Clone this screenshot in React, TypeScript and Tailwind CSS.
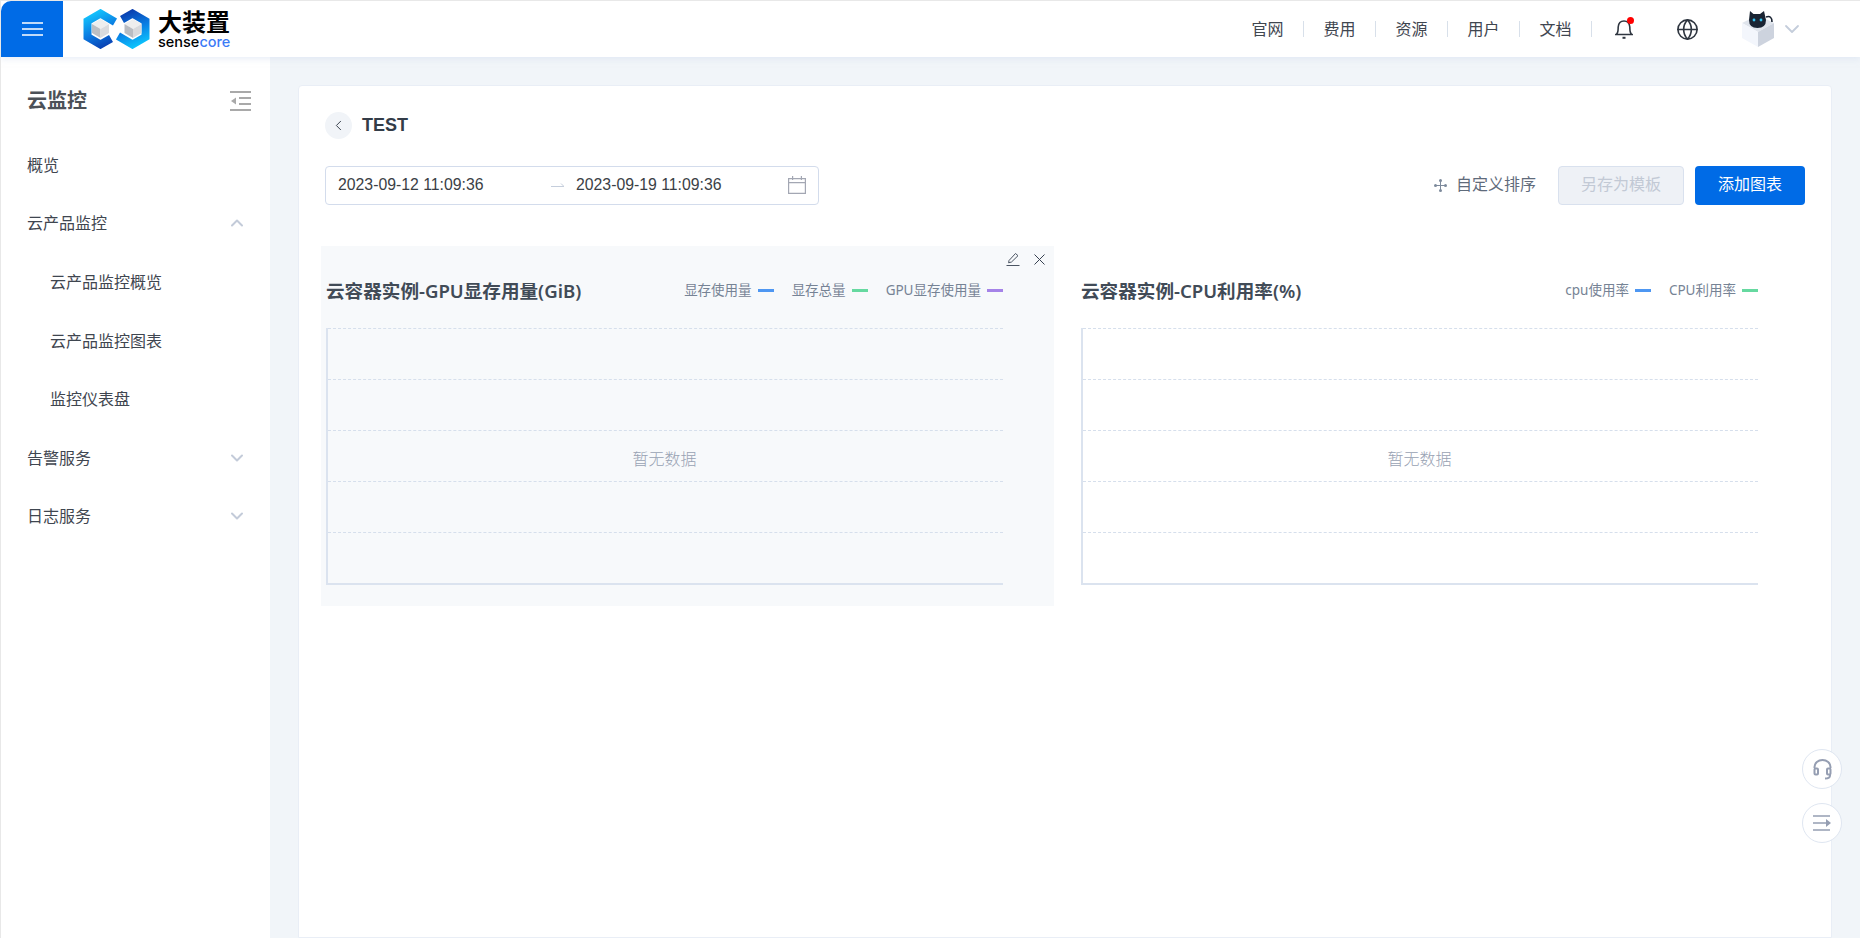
import { ChevronDown, ChevronUp, ChevronLeft, Globe } from 'lucide-react';

const FONT = 'font-["Noto_Sans","Noto_Sans_CJK_SC",sans-serif]';

const menu = [
  { label: '概览', top: true },
  { label: '云产品监控', chevron: 'up' },
  { label: '云产品监控概览', sub: true },
  { label: '云产品监控图表', sub: true },
  { label: '监控仪表盘', sub: true },
  { label: '告警服务', chevron: 'down' },
  { label: '日志服务', chevron: 'down' },
];

const navItems = ['官网', '费用', '资源', '用户', '文档'];

type LegendItem = { name: string; color: string };

function Logo() {
  return (
    <div className="flex items-center">
      <svg width="67" height="40" viewBox="0 0 67 40">
        <defs>
          <linearGradient id="la" gradientUnits="userSpaceOnUse" x1="10" y1="2" x2="26" y2="38">
            <stop offset="0" stopColor="#14c8ff" />
            <stop offset="0.55" stopColor="#0a78e0" />
            <stop offset="1" stopColor="#0a3cae" />
          </linearGradient>
          <linearGradient id="lb" gradientUnits="userSpaceOnUse" x1="44" y1="2" x2="58" y2="38">
            <stop offset="0" stopColor="#0a3cae" />
            <stop offset="0.5" stopColor="#0a80e5" />
            <stop offset="1" stopColor="#0ccbff" />
          </linearGradient>
        </defs>
        <path d="M32 13 L17.5 4.5 L4.5 12 L4.5 28 L17.5 35.5 L28 29.5" fill="none" stroke="url(#la)" strokeWidth="8" />
        <path d="M35 27 L49.5 35.5 L62.5 28 L62.5 12 L49.5 4.5 L39 10.5" fill="none" stroke="url(#lb)" strokeWidth="8" />
        <path d="M17.5 10 L26 15 L17.5 20 L9 15 Z" fill="#eeeeee" />
        <path d="M9 15 L17.5 20 L17.5 29 L9 24 Z" fill="#bcbfc4" />
        <path d="M26 15 L17.5 20 L17.5 29 L26 24 Z" fill="#dadbde" />
        <path d="M50 10 L58.5 15 L50 20 L41.5 15 Z" fill="#eeeeee" />
        <path d="M41.5 15 L50 20 L50 29 L41.5 24 Z" fill="#b9bcc2" />
        <path d="M58.5 15 L50 20 L50 29 L58.5 24 Z" fill="#d8d9dc" />
      </svg>
      <div className="mt-[-3px] ml-[8px] flex flex-col">
        <span className='text-[24px] leading-[27px] font-bold text-black font-["Noto_Sans_CJK_SC",sans-serif]'>大装置</span>
        <div className='mt-[1px] flex text-[14.5px] leading-[13px] font-medium font-["Inter",sans-serif]'>
          <span className="text-black">sense</span>
          <span className="text-[#3b7bf6]">core</span>
        </div>
      </div>
    </div>
  );
}

function Avatar() {
  return (
    <svg width="34" height="36" viewBox="0 0 34 36">
      <path d="M1 12 L17 4 L33 12 L17 21 Z" fill="#dfe4ec" />
      <path d="M1 12 L17 21 L17 36 L1 27 Z" fill="#f3f6fc" />
      <path d="M33 12 L17 21 L17 36 L33 27 Z" fill="#cdd3de" />
      <path d="M9 0 L12.5 3 L19 3 L23 0 L25 9 Q25 17 16.5 17 Q8 17 8 9 Z" fill="#1a2433" />
      <path d="M25 6 Q31 4 31 11" stroke="#1a2433" strokeWidth="1.6" fill="none" />
      <circle cx="13" cy="9" r="1.4" fill="#35c3f0" />
      <circle cx="20" cy="9" r="1.4" fill="#35c3f0" />
    </svg>
  );
}

function ChartCard({ title, legend, hovered }: { title: string; legend: LegendItem[]; hovered?: boolean }) {
  return (
    <div className={`relative h-[360px] w-[733px] shrink-0 pl-[5px] ${hovered ? 'bg-[#f7f9fb]' : ''}`}>
      {hovered && (
        <div className="absolute top-[6px] right-[9px] flex items-center gap-[14px]">
          <svg width="14" height="14" viewBox="0 0 14 14" fill="none" stroke="#4b5563" strokeWidth="1">
            <path d="M3 8.5 L9.5 1.5 L12 3.7 L5.5 10 L2.6 10.8 Z" />
            <path d="M0.5 13.5 H13.5" />
          </svg>
          <svg width="11" height="11" viewBox="0 0 11 11" fill="none" stroke="#374151" strokeWidth="1">
            <path d="M0.5 0.5 L10.5 10.5 M10.5 0.5 L0.5 10.5" />
          </svg>
        </div>
      )}
      <div className="flex h-[82px] w-[677px] items-center justify-between pt-[7px]">
        <span className={`text-[18.6px] font-semibold text-[#414b57] ${FONT}`}>{title}</span>
        <div className="flex items-center gap-[18px] overflow-hidden">
          {legend.map((item) => (
            <div key={item.name} className="flex shrink-0 items-center gap-[6px]">
              <span className={`text-[13.5px] text-[#768395] ${FONT}`}>{item.name}</span>
              <span className="h-[3px] w-[16px]" style={{ backgroundColor: item.color }} />
            </div>
          ))}
        </div>
      </div>
      <div className="relative h-[257px] w-[677px] border-b-2 border-l-2 border-[#dbe3ef]">
        {[0, 1, 2, 3, 4].map((i) => (
          <div key={i} className="h-[51px] border-t border-dashed border-[#d6dfec]" />
        ))}
        <div className={`absolute inset-0 flex items-center justify-center pt-[6px] pr-[2px] text-[16px] font-light text-[#98a2b3] ${FONT}`}>
          暂无数据
        </div>
      </div>
    </div>
  );
}

export default function App() {
  return (
    <div className={`flex h-[938px] w-[1860px] flex-col overflow-hidden border-t border-l border-[#e8e8e8] bg-[#f1f5f9] ${FONT}`}>
      <header className="z-10 flex h-[56px] shrink-0 items-center bg-white pr-[56px] shadow-[0_2px_6px_rgba(210,222,240,0.5)]">
        <button className="flex h-full w-[62px] items-center justify-center rounded-tl-[10px] bg-[#006be6]">
          <svg width="21" height="16" viewBox="0 0 21 16" stroke="white" strokeWidth="1.6">
            <path d="M0 2 H21 M0 8 H21 M0 14 H21" />
          </svg>
        </button>
        <div className="ml-[20px]">
          <Logo />
        </div>
        <div className="ml-auto flex items-center">
          {navItems.map((item) => (
            <div key={item} className="flex w-[72px] items-center justify-between">
              <span className="w-[71px] text-center text-[16px] text-[#3f4650]">{item}</span>
              <span className="h-[16px] w-px bg-[#d8e0ea]" />
            </div>
          ))}
          <div className="relative ml-[23px]">
            <svg width="18" height="20" viewBox="0 0 18 20" fill="none" stroke="#2f3640" strokeWidth="1.6">
              <path d="M1 15.5 C3.5 14 3 11 3.2 8 C3.5 4 6 2 9 2 C12 2 14.5 4 14.8 8 C15 11 14.5 14 17 15.5 Z" />
              <path d="M7.5 18.8 H10.5" strokeWidth="2" />
            </svg>
            <span className="absolute top-[-2px] right-[-1px] h-[7px] w-[7px] rounded-full bg-[#ff0000]" />
          </div>
          <Globe className="ml-[43px]" size={23} strokeWidth={1.7} color="#2f3640" />
          <div className="ml-[42px]">
            <Avatar />
          </div>
          <ChevronDown className="ml-[5px]" size={24} strokeWidth={1.8} color="#c4cddb" />
        </div>
      </header>

      <div className="flex min-h-0 flex-1">
        <aside className="w-[269px] shrink-0 bg-white">
          <div className="flex h-[78.5px] items-center justify-between pt-[10px] pr-[19px] pl-[26px]">
            <span className="text-[20px] font-semibold text-[#4c5158]">云监控</span>
            <svg width="21" height="20" viewBox="0 0 21 20" stroke="#a9a9a9" strokeWidth="2" fill="none">
              <path d="M0 1 H21 M9 7 H21 M9 13 H21 M0 19 H21" />
              <path d="M6 6.5 L1 10 L6 13.5 Z" fill="#a9a9a9" stroke="none" />
            </svg>
          </div>
          <nav className="flex flex-col">
            {menu.map((item) => (
              <div
                key={item.label}
                className={`flex h-[58.6px] items-center justify-between pr-[23px] text-[16px] text-[#3f4650] ${item.sub ? 'pl-[49px]' : 'pl-[26px]'}`}
              >
                <span>{item.label}</span>
                {item.chevron === 'up' && <ChevronUp size={20} strokeWidth={2.4} color="#c3cbd9" />}
                {item.chevron === 'down' && <ChevronDown size={20} strokeWidth={2.4} color="#c3cbd9" />}
              </div>
            ))}
          </nav>
        </aside>

        <main className="relative min-w-0 flex-1 px-[28px] pt-[28px]">
          <div className="relative h-full w-[1534px] rounded-t border border-[#e9eef6] bg-white pt-[25px] pl-[26px]">
            <div className="flex items-center gap-[10px]">
              <span className="flex h-[27px] w-[27px] items-center justify-center rounded-full bg-[#f1f4f8]">
                <ChevronLeft size={17} strokeWidth={1.4} color="#39424e" />
              </span>
              <span className='pt-[1px] text-[18px] leading-[27px] font-bold text-[#333c48] font-["Liberation_Sans",sans-serif]'>TEST</span>
            </div>

            <div className='mt-[27px] flex items-center justify-between pr-[26px] font-["Liberation_Sans","Noto_Sans_CJK_SC",sans-serif]'>
              <div className="flex h-[39px] w-[494px] items-center rounded border border-[#d3dcec] pr-[12px] pb-[1px] pl-[12px] text-[15.8px] text-[#3b3f46]">
                <span className="w-[213px]">2023-09-12 11:09:36</span>
                <span className="w-[25px]">
                  <svg width="13" height="6" viewBox="0 0 13 6" stroke="#c5cedc" fill="none">
                    <path d="M0 4.5 H13 L10 1.5" />
                  </svg>
                </span>
                <span>2023-09-19 11:09:36</span>
                <svg className="ml-auto" width="18" height="18" viewBox="0 0 18 18" fill="none" stroke="#a3a7b3" strokeWidth="1.2">
                  <path d="M0.6 2.6 H17.4 V17.4 H0.6 Z M0.6 6.6 H17.4 M4.6 0 V4 M13.4 0 V4" />
                </svg>
              </div>
              <div className={`flex items-center ${FONT}`}>
                <svg width="13" height="13" viewBox="0 0 13 13" fill="#7d8a9c">
                  <path d="M6 1 H7 V12 H6 Z M1 6 H12 V7 H1 Z" />
                  <circle cx="6.5" cy="1.5" r="1.5" />
                  <circle cx="6.5" cy="11.5" r="1.5" />
                  <circle cx="1.5" cy="6.5" r="1.5" />
                  <circle cx="11.5" cy="6.5" r="1.5" />
                </svg>
                <span className="ml-[9px] pb-[3px] text-[16px] text-[#5f6b7b]">自定义排序</span>
                <button className="ml-[22px] h-[39px] w-[126px] rounded border border-[#d9e1ee] bg-[#eef1f6] pb-[3px] text-[16px] text-[#c2c9d5]">
                  另存为模板
                </button>
                <button className="ml-[11px] h-[39px] w-[110px] rounded bg-[#006be6] pb-[3px] text-[16px] text-white">添加图表</button>
              </div>
            </div>

            <div className="mt-[41px] ml-[-4px] flex gap-[22px]">
              <ChartCard
                hovered
                title="云容器实例-GPU显存用量(GiB)"
                legend={[
                  { name: '显存使用量', color: '#4e97f2' },
                  { name: '显存总量', color: '#66d9a0' },
                  { name: 'GPU显存使用量', color: '#a583e8' },
                ]}
              />
              <ChartCard
                title="云容器实例-CPU利用率(%)"
                legend={[
                  { name: 'cpu使用率', color: '#4e97f2' },
                  { name: 'CPU利用率', color: '#66d9a0' },
                ]}
              />
            </div>

            <div className="absolute top-[663px] right-[-11px] flex flex-col gap-[14px]">
              <button className="flex h-[40px] w-[40px] items-center justify-center rounded-full border border-[#dfe6f1] bg-white">
                <svg width="19" height="21" viewBox="0 0 19 21" fill="none" stroke="#959eb2" strokeWidth="2">
                  <path d="M1.5 9 V8 A8 7 0 0 1 17.5 8 V9" />
                  <rect x="1.5" y="9.5" width="3.5" height="6" rx="1" />
                  <rect x="14" y="9.5" width="3.5" height="6" rx="1" />
                  <path d="M17 15.5 V16.5 Q17 19.5 12 19.5" />
                </svg>
              </button>
              <button className="flex h-[40px] w-[40px] items-center justify-center rounded-full border border-[#dfe6f1] bg-white">
                <svg width="18" height="16" viewBox="0 0 18 16" fill="none" stroke="#959eb2" strokeWidth="1.4">
                  <path d="M0 1 H17 M0 8 H13 M0 15 H17" />
                  <path d="M13 4 L18 8 L13 12 Z" fill="#959eb2" stroke="none" />
                </svg>
              </button>
            </div>
          </div>
        </main>
      </div>
    </div>
  );
}
